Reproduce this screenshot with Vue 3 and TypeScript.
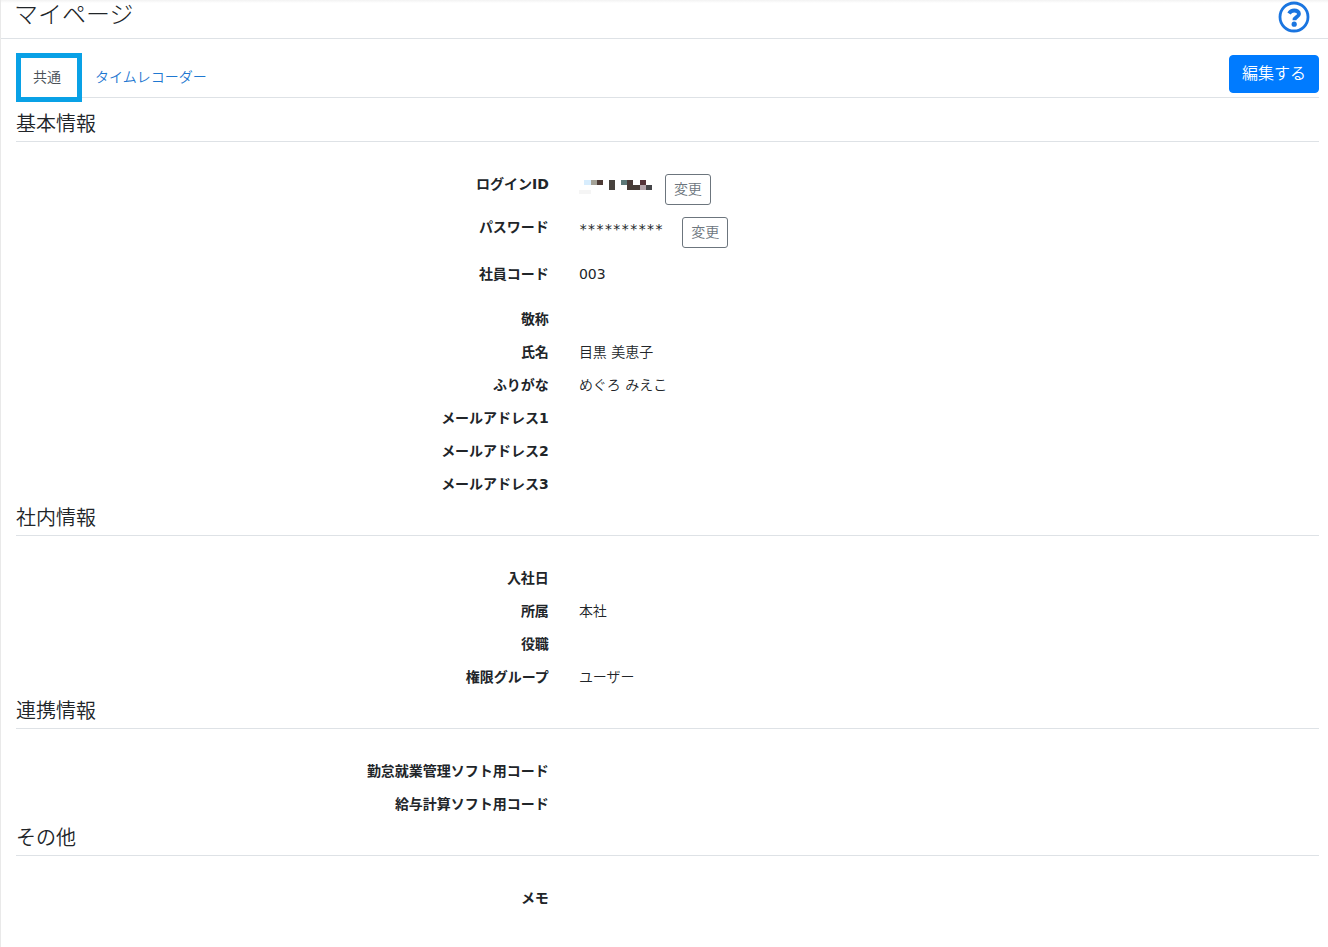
<script setup lang="ts">
interface Row {
  label: string
  value?: string
  kind?: 'login' | 'password' | 'code'
}

interface Section {
  title: string
  rows: Row[]
}

const sections: Section[] = [
  {
    title: '基本情報',
    rows: [
      { label: 'ログインID', kind: 'login' },
      { label: 'パスワード', value: '**********', kind: 'password' },
      { label: '社員コード', value: '003', kind: 'code' },
      { label: '敬称' },
      { label: '氏名', value: '目黒 美恵子' },
      { label: 'ふりがな', value: 'めぐろ みえこ' },
      { label: 'メールアドレス1' },
      { label: 'メールアドレス2' },
      { label: 'メールアドレス3' },
    ],
  },
  {
    title: '社内情報',
    rows: [
      { label: '入社日' },
      { label: '所属', value: '本社' },
      { label: '役職' },
      { label: '権限グループ', value: 'ユーザー' },
    ],
  },
  {
    title: '連携情報',
    rows: [{ label: '勤怠就業管理ソフト用コード' }, { label: '給与計算ソフト用コード' }],
  },
  { title: 'その他', rows: [{ label: 'メモ' }] },
]
</script>

<template>
  <div class="page">
    <header class="header">
      <h1 class="title">マイページ</h1>
      <a class="help" href="#help" aria-label="ヘルプ">
        <svg viewBox="0 0 32 32" width="32" height="32" fill="none" stroke="currentColor">
          <circle cx="16" cy="16" r="14" stroke-width="2.8" />
          <path d="M11 12.4C12.2 10.4 13.8 9.5 16.2 9.5C18.9 9.5 21 10.8 21 13C21 16 16.4 15.8 16.4 19.2" stroke-width="3.8" />
          <circle cx="16.2" cy="23.2" r="2.6" fill="currentColor" stroke="none" />
        </svg>
      </a>
    </header>

    <main class="content">
      <div class="toolbar">
        <nav class="tabs">
          <a class="tab active" href="#common" aria-current="page">共通</a>
          <a class="tab" href="#recorder">タイムレコーダー</a>
        </nav>
        <button class="edit" type="button">編集する</button>
      </div>

      <section v-for="section in sections" :key="section.title">
        <h2 class="heading">{{ section.title }}</h2>
        <dl class="rows">
          <div v-for="row in section.rows" :key="row.label" class="row" :class="row.kind">
            <dt>{{ row.label }}</dt>
            <dd>
              <svg v-if="row.kind === 'login'" class="mosaic" viewBox="0 0 74 16" width="74" height="16" shape-rendering="crispEdges">
                <rect x="0" y="11" width="12" height="4" fill="#f5f5f5" />
                <rect x="5" y="1" width="7" height="5" fill="#d8edfd" />
                <rect x="12" y="1" width="6" height="5" fill="#a4a297" />
                <rect x="18" y="1" width="6" height="5" fill="#4d3a35" />
                <rect x="30" y="1" width="6" height="10" fill="#48423d" />
                <rect x="42" y="1" width="6" height="5" fill="#5c7877" />
                <rect x="48" y="1" width="6" height="5" fill="#493a37" />
                <rect x="61" y="1" width="6" height="5" fill="#55333a" />
                <rect x="48" y="6" width="13" height="5" fill="#463b36" />
                <rect x="61" y="6" width="6" height="5" fill="#b4a4ac" />
                <rect x="67" y="6" width="6" height="5" fill="#454549" />
              </svg>
              <span v-else>{{ row.value }}</span>
              <button v-if="row.kind === 'login' || row.kind === 'password'" class="change" type="button" :aria-label="row.label + 'を変更'">変更</button>
            </dd>
          </div>
        </dl>
      </section>
    </main>
  </div>
</template>

<style>
body {
  margin: 0;
  background: #fff;
}
</style>

<style scoped>
.page {
  box-sizing: border-box;
  min-height: 100vh;
  border-left: 1px solid #e9e9e9;
  color: #212529;
  font-family: "DejaVu Sans", "Noto Sans CJK JP", sans-serif;
  font-size: 14px;
  line-height: 21px;
}

.header {
  display: flex;
  justify-content: space-between;
  align-items: flex-start;
  box-sizing: border-box;
  height: 39px;
  padding: 0 18px 0 13px;
  border-bottom: 1px solid #dee2e6;
  background: linear-gradient(#f2f2f2, #fff 3px);
}

.title {
  margin: 0;
  font-size: 24px;
  font-weight: 300;
  line-height: 30px;
}

.help {
  height: 32px;
  padding-top: 1px;
  color: #1a75e0;
}

.help svg {
  display: block;
}

.content {
  padding: 0 9px 0 15px;
}

.toolbar {
  display: flex;
  justify-content: space-between;
  align-items: flex-start;
  box-sizing: border-box;
  height: 59px;
  padding-top: 16px;
  margin-bottom: 8px;
  border-bottom: 1px solid #dee2e6;
}

.tabs {
  display: flex;
  padding-top: 4px;
}

.tab {
  padding: 8px 17px;
  color: #1f78d1;
  font-weight: 350;
  text-decoration: none;
}

.tab.active {
  position: relative;
  background: #fff;
  color: #495057;
}

.tab.active::after {
  content: "";
  position: absolute;
  box-sizing: border-box;
  top: -6px;
  left: 0;
  width: 66px;
  height: 49px;
  border: 5px solid #09a1e6;
}

.edit {
  height: 38px;
  padding: 0 12px;
  border: 1px solid #007bff;
  border-radius: 4px;
  background: #007bff;
  color: #fff;
  font-family: inherit;
  font-size: 16px;
  font-weight: 350;
  line-height: 24px;
}

.heading {
  margin: 0 0 25px;
  padding: 6px 0 5px;
  border-bottom: 1px solid #dee2e6;
  font-size: 20px;
  font-weight: 350;
  line-height: 24px;
}

.rows {
  margin: 0;
}

.row {
  display: grid;
  grid-template-columns: 18fr 25fr;
  column-gap: 30px;
  align-items: start;
  min-height: 33px;
}

dt {
  padding: 7px 0 5px;
  font-weight: 700;
  text-align: right;
}

dd {
  display: flex;
  align-items: flex-start;
  margin: 0;
  padding: 7px 0 5px;
  font-weight: 350;
}

.password {
  min-height: 47px;
}

.password span {
  padding-top: 2px;
  font-family: "DejaVu Sans Mono", monospace;
}

.code {
  min-height: 45px;
}

.code dd {
  font-weight: 400;
}

.mosaic {
  padding-top: 5px;
}

.change {
  height: 31px;
  margin-left: 12px;
  padding: 0 8px;
  border: 1px solid #6c757d;
  border-radius: 3px;
  background: #fff;
  color: #6c757d;
  font-family: inherit;
  font-size: 14px;
  font-weight: 350;
  line-height: 21px;
}

.password .change {
  margin-left: 19px;
}
</style>
